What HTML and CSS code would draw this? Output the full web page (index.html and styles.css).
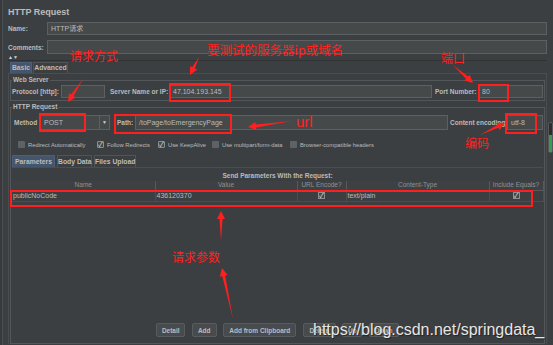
FILE: index.html
```html
<!DOCTYPE html>
<html lang="zh-CN">

<head>
    <meta charset="UTF-8">
    <meta name="viewport" content="width=device-width, initial-scale=1.0">
    <title>HTTP Request</title>
    <link rel="stylesheet" href="styles.css">
</head>

<body>
    <div class="app">
        <div class="side"></div>

        <div class="main">
            <h1 class="title">HTTP Request</h1>

            <div class="form-row name-row">
                <label class="lbl">Name:</label>
                <div class="field grow">HTTP请求</div>
            </div>
            <div class="form-row comments-row">
                <label class="lbl">Comments:</label>
                <div class="field grow tall"></div>
            </div>
            <div class="collapse">▲▼</div>

            <!-- Basic / Advanced -->
            <div class="tabs">
                <span class="tab active w-basic">Basic</span>
                <span class="tab w-adv">Advanced</span>
            </div>

            <div class="panel">
                <fieldset class="group web-server">
                    <legend>Web Server</legend>
                    <div class="form-row">
                        <label class="lbl l-proto">Protocol [http]:</label>
                        <div class="field f-proto"></div>
                        <label class="lbl l-server">Server Name or IP:</label>
                        <div class="field grow">47.104.193.145</div>
                        <label class="lbl l-port">Port Number:</label>
                        <div class="field f-port">80</div>
                    </div>
                </fieldset>

                <fieldset class="group http-req">
                    <legend>HTTP Request</legend>
                    <div class="form-row method-row">
                        <label class="lbl l-method">Method</label>
                        <div class="select">
                            <span class="select-val">POST</span>
                            <span class="select-arrow">▼</span>
                        </div>
                        <label class="lbl l-path">Path:</label>
                        <div class="field grow">/toPage/toEmergencyPage</div>
                        <label class="lbl l-enc">Content encoding:</label>
                        <div class="field f-enc">utf-8</div>
                    </div>

                    <div class="checks">
                        <span class="check c1"><span class="cb"></span>Redirect Automatically</span>
                        <span class="check c2"><span class="cb on">✓</span>Follow Redirects</span>
                        <span class="check c3"><span class="cb on">✓</span>Use KeepAlive</span>
                        <span class="check c4"><span class="cb"></span>Use multipart/form-data</span>
                        <span class="check c5"><span class="cb"></span>Browser-compatible headers</span>
                    </div>

                    <div class="tabs sub-tabs">
                        <span class="tab active w-params">Parameters</span>
                        <span class="tab w-body">Body Data</span>
                        <span class="tab w-files">Files Upload</span>
                    </div>

                    <div class="params">
                        <div class="params-title">Send Parameters With the Request:</div>
                        <div class="table-wrap">
                            <table class="param-table">
                                <colgroup>
                                    <col style="width:143px">
                                    <col style="width:142px">
                                    <col style="width:49px">
                                    <col style="width:143px">
                                    <col style="width:54px">
                                </colgroup>
                                <thead>
                                    <tr>
                                        <th>Name</th>
                                        <th>Value</th>
                                        <th>URL Encode?</th>
                                        <th>Content-Type</th>
                                        <th>Include Equals?</th>
                                    </tr>
                                </thead>
                                <tbody>
                                    <tr>
                                        <td>publicNoCode</td>
                                        <td>436120370</td>
                                        <td class="mid"><span class="tcb">✓</span></td>
                                        <td>text/plain</td>
                                        <td class="mid"><span class="tcb">✓</span></td>
                                    </tr>
                                </tbody>
                            </table>
                        </div>
                        <div class="buttons">
                            <button class="btn b-detail">Detail</button>
                            <button class="btn b-add">Add</button>
                            <button class="btn b-clip">Add from Clipboard</button>
                            <button class="btn b-del">Delete</button>
                            <button class="btn b-up">Up</button>
                            <button class="btn b-down">Down</button>
                        </div>
                    </div>
                </fieldset>
            </div>
        </div>

        <!-- 内存指示条 -->
        <div class="heap"><div class="heap-fill"></div></div>

        <!-- 红色标注 -->
        <div class="mark m-ip"></div>
        <div class="mark m-port"></div>
        <div class="mark m-post"></div>
        <div class="mark m-path"></div>
        <div class="mark m-enc"></div>
        <div class="mark m-row"></div>

        <svg class="arrows" width="553" height="345" viewBox="0 0 553 345">
            <polygon points="83,79 73.6,96.1 75.7,97.5 68,102 69,93.1 71.1,94.5" />
            <polygon points="199,57 194.9,68.5 197.2,69.6 190,75 190,66 192.2,67.2" />
            <polygon points="453,65 466,78.8 464.4,80.6 473,83 469.7,74.7 468,76.5" />
            <polygon points="292,121 256.1,127.4 256.5,129.9 248,127 255.4,122 255.7,124.4" />
            <polygon points="480,135 498.4,127.8 499.5,130.1 505,123 496.1,122.9 497.1,125.1" />
            <polygon points="221,241 222.5,219 225,219 221,211 217,219 219.5,219" />
            <polygon points="233,319 225.2,275.5 227.6,275 222,268 219.8,276.7 222.2,276.1" />
        </svg>

        <span class="note n-method">请求方式</span>
        <span class="note n-server">要测试的服务器ip或域名</span>
        <span class="note n-port">端口</span>
        <span class="note n-url">url</span>
        <span class="note n-enc">编码</span>
        <span class="note n-params">请求参数</span>

        <span class="watermark">https://blog.csdn.net/springdata_</span>
    </div>
</body>

</html>
```

FILE: styles.css
```css
* {
    box-sizing: border-box;
}

body {
    margin: 0;
    background: #3c3f41;
    font-family: "Liberation Sans", "Noto Sans CJK SC", Arial, sans-serif;
    color: #bbbbbb;
}

.app {
    position: relative;
    display: flex;
    width: 553px;
    height: 345px;
    overflow: hidden;
    background: #3c3f41;
}

.side {
    width: 3px;
    background: #37393b;
    border-right: 1px solid #4c4f51;
}

.main {
    flex: 1;
    min-width: 0;
    display: flex;
    flex-direction: column;
    padding: 6px 6px 1px 5px;
}

.title {
    margin: 0;
    height: 12px;
    font-size: 9px;
    line-height: 12px;
    font-weight: bold;
}

.form-row {
    display: flex;
    align-items: center;
}

.lbl {
    font-size: 6.5px;
    font-weight: bold;
    white-space: nowrap;
    flex-shrink: 0;
}

.name-row .lbl,
.comments-row .lbl {
    width: 39px;
}

.name-row {
    margin-top: 4px;
}

.comments-row {
    margin-top: 5px;
}

.field {
    height: 13px;
    background: #45494a;
    border: 1px solid #5d6062;
    font-size: 7px;
    line-height: 11px;
    padding: 0 3px;
    white-space: nowrap;
    overflow: hidden;
    flex-shrink: 0;
}

.grow {
    flex: 1;
    min-width: 0;
}

.field.tall {
    height: 14px;
}

.collapse {
    height: 7px;
    font-size: 5px;
    line-height: 6px;
    color: #cfcfcf;
    border-bottom: 1px solid #303234;
}

/* 标签页 */
.tabs {
    display: flex;
    margin-top: 1px;
    padding-left: 2px;
    height: 11px;
}

.tab {
    font-size: 6.8px;
    font-weight: bold;
    line-height: 10px;
    text-align: center;
    border: 1px solid #515456;
    border-bottom: 0;
    white-space: nowrap;
}

.tab.active {
    background: #45556b;
    border-color: #4d5f78;
}

.w-basic { width: 22px; margin-right: 1px; }
.w-adv { width: 35px; }

.panel {
    flex: 1;
    display: flex;
    flex-direction: column;
    border: 1px solid #4a4d4f;
    border-top-color: #3e5068;
    border-bottom: 0;
}

.group {
    margin: 2px 1px 0;
    padding: 0 1px 2px;
    border: 1px solid #545759;
    min-width: 0;
}

.group legend {
    padding: 0 1px;
    font-size: 6.5px;
    font-weight: bold;
    line-height: 8px;
}

.web-server .form-row {
    margin-top: 1px;
}

.l-proto { width: 49px; }
.f-proto { width: 44px; }
.l-server { width: 59px; margin-left: 5px; }
.l-port { width: 43px; margin-left: 3px; }
.f-port { width: 65px; }

.http-req {
    flex: 1;
    display: flex;
    flex-direction: column;
    padding: 0 1px 6px;
}

.method-row {
    margin-top: 4px;
}

.method-row .field {
    height: 15px;
    line-height: 13px;
}

.l-method { width: 28px; padding-left: 2px; }

.select {
    width: 70px;
    height: 15px;
    display: flex;
    background: #45494a;
    border: 1px solid #5d6062;
    font-size: 7px;
    line-height: 13px;
}

.select-val {
    flex: 1;
    padding-left: 3px;
}

.select-arrow {
    width: 10px;
    border-left: 1px solid #5d6062;
    font-size: 5px;
    text-align: center;
    color: #d0d0d0;
}

.l-path { width: 18px; margin-left: 7px; }
.l-enc { width: 57px; margin-left: 2px; }
.f-enc { width: 36px; }

.checks {
    display: flex;
    align-items: center;
    margin-top: 10px;
    height: 9px;
    padding-left: 6px;
    font-size: 5.8px;
}

.check {
    display: flex;
    align-items: center;
    gap: 3px;
    white-space: nowrap;
}

.c1 { width: 79px; }
.c2 { width: 61px; }
.c3 { width: 54px; }
.c4 { width: 78px; }

.cb {
    width: 7px;
    height: 7px;
    background: #5f6264;
    border-radius: 1px;
    font-size: 7px;
    line-height: 7px;
    text-align: center;
    color: #d8d8d8;
}

.cb.on {
    background: #45494a;
    border: 1px solid #8b8e90;
    line-height: 5px;
}

.sub-tabs {
    margin-top: 6px;
    height: 12px;
    padding-left: 0;
    gap: 2px;
}

.sub-tabs .tab {
    line-height: 11px;
}

.w-params { width: 43px; }
.w-body { width: 35px; }
.w-files { width: 42px; }

.params {
    flex: 1;
    display: flex;
    flex-direction: column;
    border-top: 1px solid #3e5068;
}

.params-title {
    margin-top: 3px;
    height: 9px;
    line-height: 9px;
    text-align: center;
    font-size: 6.5px;
    font-weight: bold;
}

.table-wrap {
    flex: 1;
    margin-top: 1px;
}

.param-table {
    width: 100%;
    border-collapse: collapse;
    table-layout: fixed;
}

.param-table th {
    height: 9px;
    padding: 0;
    font-size: 6.5px;
    font-weight: normal;
    line-height: 8px;
    color: #8e9193;
    border-right: 1px solid #57595b;
    border-bottom: 1px solid #57595b;
    background: #3e4143;
}

.param-table td {
    height: 11px;
    padding: 0 1px;
    font-size: 7px;
    line-height: 10px;
    white-space: nowrap;
    border-right: 1px solid #4b4e50;
    border-bottom: 1px solid #4b4e50;
}

.param-table td.mid {
    text-align: center;
}

.tcb {
    display: inline-block;
    width: 7px;
    height: 7px;
    border: 1px solid #8b8e90;
    background: #45494a;
    font-size: 7px;
    line-height: 5px;
    color: #dcdcdc;
    vertical-align: middle;
}

.buttons {
    display: flex;
    justify-content: center;
    gap: 6.5px;
    margin-top: 3px;
    height: 14px;
}

.btn {
    height: 14px;
    padding: 0;
    font-family: inherit;
    font-size: 6.5px;
    font-weight: bold;
    color: #bbbbbb;
    background: #484b4d;
    border: 1px solid #595c5e;
    border-radius: 2px;
}

.b-detail { width: 29px; }
.b-add { width: 25px; }
.b-clip { width: 73px; }
.b-del { width: 33px; }
.b-up { width: 20px; }
.b-down { width: 30px; }

.heap {
    position: absolute;
    left: 548px;
    top: 122px;
    width: 5px;
    height: 31px;
    display: flex;
    align-items: flex-end;
    background: #2b2d2e;
    border: 1px solid #55585a;
    border-radius: 2px;
}

.heap-fill {
    width: 100%;
    height: 17px;
    background: #3e9a4c;
}

/* 标注层 */
.mark {
    position: absolute;
    border: 2px solid #ff1f1f;
}

.m-ip { left: 169px; top: 83px; width: 62px; height: 19px; }
.m-port { left: 478px; top: 84px; width: 31px; height: 18px; }
.m-post { left: 39px; top: 113px; width: 47px; height: 19px; }
.m-path { left: 114px; top: 114px; width: 118px; height: 20px; }
.m-enc { left: 505px; top: 113px; width: 32px; height: 21px; }
.m-row { left: 10px; top: 190px; width: 523px; height: 17px; }

.arrows {
    position: absolute;
    left: 0;
    top: 0;
    fill: #ff1f1f;
}

.note {
    position: absolute;
    font-family: "Noto Sans CJK SC", sans-serif;
    font-size: 12px;
    line-height: 12px;
    color: #ff2222;
    white-space: nowrap;
}

.n-method { left: 70px; top: 50px; }
.n-server { left: 207px; top: 44px; font-size: 12.5px; }
.n-port { left: 441px; top: 52px; }
.n-url { left: 296px; top: 114px; font-family: "Liberation Sans", sans-serif; font-size: 15px; line-height: 15px; }
.n-enc { left: 465px; top: 137px; }
.n-params { left: 172px; top: 251px; }

.watermark {
    position: absolute;
    left: 313px;
    top: 321px;
    font-size: 16px;
    line-height: 18px;
    color: #e6e6e6;
    text-shadow: 1px 1px 1px rgba(0, 0, 0, 0.45);
    white-space: nowrap;
}
```
